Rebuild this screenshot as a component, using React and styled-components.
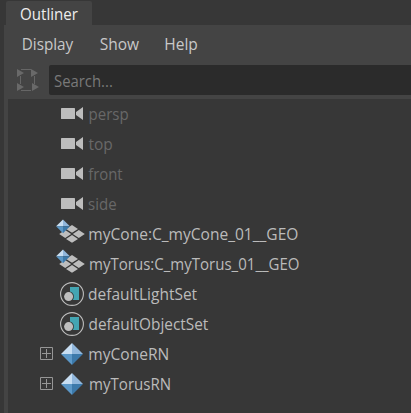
import React from 'react';
import styled, { createGlobalStyle } from 'styled-components';

const GlobalStyle = createGlobalStyle`
  * { box-sizing: border-box; }
  body { margin: 0; background: #373737; overflow: hidden; }
`;

const Window = styled.div`
  width: 411px;
  height: 413px;
  padding: 1px 0 0 4px;
  display: flex;
  flex-direction: column;
  background: #373737;
  color: #bbb;
  font: 15.5px/30px "Open Sans", "Noto Sans", sans-serif;
  white-space: nowrap;
`;

const Tab = styled.div`
  width: 86px;
  height: 24px;
  margin-left: 2px;
  padding-left: 14px;
  border-radius: 2px 2px 0 0;
  background: #444;
  color: #eee;
  line-height: 27px;
`;

const Panel = styled.div`
  flex: 1;
  display: flex;
  flex-direction: column;
  padding-left: 4px;
  background: #444;
`;

const MenuBar = styled.div`
  height: 40px;
  display: flex;
  line-height: 38px;
  padding-left: 13px;
`;

const MenuItem = styled.span`
  width: ${({ $width }) => $width}px;
  color: #c8c8c8;
`;

const SearchBar = styled.div`
  height: 30px;
  display: flex;
  align-items: center;
`;

const FilterIcon = styled.svg`
  width: 24px;
  height: 24px;
  margin: 0 8px 0 9px;
  flex: none;
`;

const SearchField = styled.div`
  flex: 1;
  height: 30px;
  padding-left: 5px;
  line-height: 32px;
  border-radius: 2px 0 0 2px;
  background: #2b2b2b;
  color: #797979;
`;

const Tree = styled.div`
  flex: 1;
  margin-top: 4px;
  background: #373737;
`;

const Row = styled.div`
  height: 30px;
  display: flex;
`;

const Expander = styled.div`
  width: 48px;
  padding: 8px 0 0 32px;
`;

const PlusBox = styled.svg`
  display: block;
  width: 13px;
  height: 13px;
`;

const Icon = styled.svg`
  display: block;
  flex: none;
  width: 32px;
  height: 30px;
`;

const Label = styled.span`
  display: block;
  line-height: 31px;
  color: ${({ $dim }) => ($dim ? '#686868' : '#bbb')};
`;

const Fit = styled.span`
  display: inline-block;
  transform-origin: 0 50%;
  transform: translateX(${({ $shift = 0 }) => $shift}px) scaleX(${({ $scale = 1 }) => $scale});
`;

const Camera = () => (
  <Icon viewBox="0 0 32 30">
    <rect x="5" y="9" width="14" height="11" rx="0.6" fill="#bdbdbd" />
    <path d="M27 8v13l-7-5v-3z" fill="#bdbdbd" />
  </Icon>
);

const Gem = ({ x = 16, y = 15, r = 11 }) => (
  <g transform={`translate(${x} ${y}) scale(${r})`}>
    <path d="M0-1V0H-1z" fill="#c8def2" />
    <path d="M0-1L1 0H0z" fill="#91b7dc" />
    <path d="M-1 0H0V1z" fill="#5c98c8" />
    <path d="M0 0H1L0 1z" fill="#3c79aa" />
  </g>
);

const Reference = () => (
  <Icon viewBox="0 0 32 30"><Gem /></Icon>
);

const Mesh = () => (
  <Icon viewBox="0 0 32 30">
    <path d="M16 6l6 3.9-6 3.9-6-3.9zM9.2 11.1l6 3.9-6 3.9-6-3.9zM22.8 11.1l6 3.9-6 3.9-6-3.9zM16 16l6 3.9-6 3.9-6-3.9z" fill="#bdbdbd" />
    <Gem x={7} y={7.3} r={6.9} />
  </Icon>
);

const SetIcon = () => (
  <Icon viewBox="0 0 32 30">
    <circle cx="16" cy="15" r="11.4" fill="none" stroke="#bdbdbd" strokeWidth="1.1" />
    <rect x="14" y="8" width="9" height="13" fill="#43a5b3" />
    <circle cx="12.6" cy="17.6" r="5.3" fill="#373737" />
    <circle cx="12.6" cy="17.6" r="4.5" fill="#bdbdbd" />
  </Icon>
);

const Plus = () => (
  <PlusBox viewBox="0 0 13 13">
    <path d="M.5.5h12v12H.5zM6.5 2v9M2 6.5h9" fill="none" stroke="#969696" />
  </PlusBox>
);

const icons = { camera: Camera, mesh: Mesh, set: SetIcon, reference: Reference };

const nodes = [
  { name: 'persp', type: 'camera', shift: 0.5, scale: 0.97 },
  { name: 'top', type: 'camera', shift: 0.5 },
  { name: 'front', type: 'camera', shift: 0.2, scale: 0.96 },
  { name: 'side', type: 'camera', scale: 0.97 },
  { name: 'myCone:C_myCone_01__GEO', type: 'mesh', shift: 0.3, scale: 1.003 },
  { name: 'myTorus:C_myTorus_01__GEO', type: 'mesh', shift: 1, scale: 0.97 },
  { name: 'defaultLightSet', type: 'set' },
  { name: 'defaultObjectSet', type: 'set', shift: 0.5, scale: 0.992 },
  { name: 'myConeRN', type: 'reference', shift: 0.3, scale: 1.004 },
  { name: 'myTorusRN', type: 'reference', shift: 1, scale: 0.973 },
];

export default function App() {
  return (
    <>
      <GlobalStyle />
      <Window>
        <Tab><Fit $scale={0.976}>Outliner</Fit></Tab>
        <Panel>
          <MenuBar>
            <MenuItem $width={78}><Fit $shift={0.7} $scale={0.985}>Display</Fit></MenuItem>
            <MenuItem $width={65}><Fit $shift={0.7}>Show</Fit></MenuItem>
            <MenuItem $width={40}><Fit $shift={0.3}>Help</Fit></MenuItem>
          </MenuBar>
          <SearchBar>
            <FilterIcon viewBox="0 0 24 24">
              <path d="M4 1.5h10M4 22.5h10M3.5 8v8M17.5 8v8" stroke="#666" fill="none" />
              <path d="M0 1l7 4-7 4zM14 1l7 4-7 4zM0 15l7 4-7 4zM15 15l7 4-7 4z" fill="#696969" />
            </FilterIcon>
            <SearchField><Fit $scale={0.96}>Search...</Fit></SearchField>
          </SearchBar>
          <Tree>
            {nodes.map(({ name, type, scale, shift }) => {
              const NodeIcon = icons[type];
              return (
                <Row key={name}>
                  <Expander>{type === 'reference' && <Plus />}</Expander>
                  <NodeIcon />
                  <Label $dim={type === 'camera'}><Fit $scale={scale} $shift={shift}>{name}</Fit></Label>
                </Row>
              );
            })}
          </Tree>
        </Panel>
      </Window>
    </>
  );
}
